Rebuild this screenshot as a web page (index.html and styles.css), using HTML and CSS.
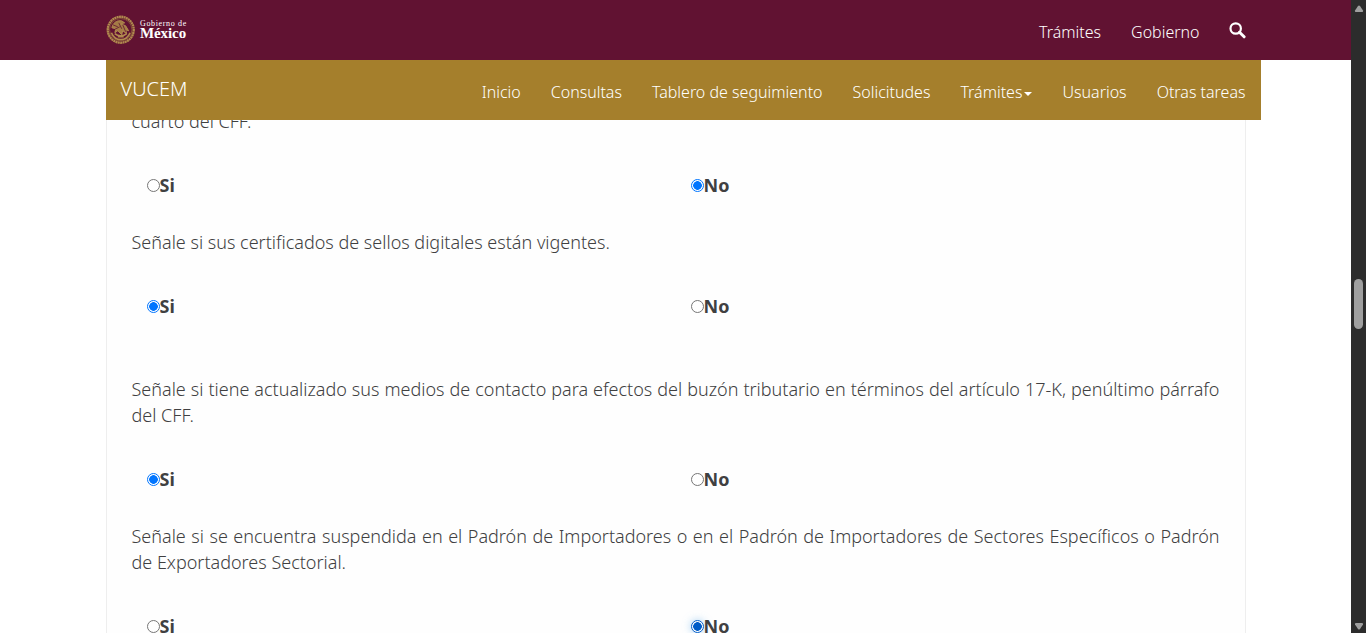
FILE: index.html
```html
<!DOCTYPE html>
<html lang="es">
<head>
<meta charset="utf-8">
<title>VUCEM</title>
<link rel="stylesheet" href="styles.css">
</head>
<body>
<div class="page">
  <header class="gov-bar">
    <a class="brand">
      <svg class="seal" viewBox="0 0 30 30" fill="none" stroke="#b08a4e">
        <circle cx="15" cy="15" r="13.200" stroke-width="2.400" stroke-dasharray="2 .4"/>
        <circle cx="15" cy="15" r="11.400" stroke="#8c6138" stroke-width=".8"/>
        <path d="M6 13c1-5 5-8 10-7l3 2-4 1 5 2 3 5-3-1 1 4-4-3-1 4-4-4-3 2 1-4z" fill="#a47b46" stroke-width="1"/>
        <path d="M7 10l5 2M8 15l6-3M13 8l3 6M17 10l3 7" stroke="#611232" stroke-width=".8"/>
        <path d="M5.500 18c2 5 6 7 9.500 7s7.500-2 9.500-7M9 19c3 3 9 3 12 0M12 22h6" stroke-width="1.700"/>
      </svg>
      <span class="wordmark"><span class="word-small">Gobierno de</span><span class="word-big">México</span></span>
    </a>
    <nav class="links gov-links">
      <a>Trámites</a><a>Gobierno</a>
      <a class="search"><svg viewBox="0 0 17 17" width="17" height="17" fill="none" stroke="#fff"><circle cx="6.700" cy="6.500" r="5.200" stroke-width="2.200"/><path d="M10.500 10.300l4.600 4.500" stroke-width="3" stroke-linecap="round"/></svg></a>
    </nav>
  </header>
  <div class="sub-bar">
    <a class="title">VUCEM</a>
    <nav class="links">
      <a>Inicio</a><a>Consultas</a><a>Tablero de seguimiento</a><a>Solicitudes</a><a>Trámites<i class="caret"></i></a><a>Usuarios</a><a>Otras tareas</a>
    </nav>
  </div>
  <main class="panel">
    <p class="question clipped">cuarto del CFF.</p>
    <div class="options first"><label><i class="radio"></i>Si</label><label><i class="radio on"></i>No</label></div>
    <p class="question">Señale si sus certificados de sellos digitales están vigentes.</p>
    <div class="options wide"><label><i class="radio on"></i>Si</label><label><i class="radio"></i>No</label></div>
    <p class="question">Señale si tiene actualizado sus medios de contacto para efectos del buzón tributario en términos del artículo 17-K, penúltimo párrafo del CFF.</p>
    <div class="options close"><label><i class="radio on"></i>Si</label><label><i class="radio"></i>No</label></div>
    <p class="question">Señale si se encuentra suspendida en el Padrón de Importadores o en el Padrón de Importadores de Sectores Específicos o Padrón de Exportadores Sectorial.</p>
    <div class="options last"><label><i class="radio"></i>Si</label><label><i class="radio on active"></i>No</label></div>
  </main>
</div>
<aside class="scrollbar">
  <svg width="10" height="8" viewBox="0 0 10 8"><path d="M4 1q1-1 2 0l3 4.500q.6 1.500-1 1.500H2Q.4 7 1 5.500z" fill="#9f9f9f"/></svg>
  <span class="thumb"></span>
  <svg width="10" height="8" viewBox="0 0 10 8"><path d="M4 7q1 1 2 0l3-4.500Q9.600 1 8 1H2Q.4 1 1 2.500z" fill="#9f9f9f"/></svg>
</aside>
</body>
</html>
```
FILE: styles.css
```css
* { box-sizing: border-box; }
body {
  margin: 0;
  height: 633px;
  overflow: hidden;
  display: flex;
  background: #fff;
  color: #404041;
  font: 300 18px/26px "Noto Sans", "Open Sans", sans-serif;
}
.page { width: 1351px; height: 633px; overflow: hidden; }
.gov-bar {
  height: 60px;
  padding: 0 105.500px 0 105.500px;
  display: flex;
  justify-content: space-between;
  background: #611232;
  color: #fff;
}
.brand { display: flex; align-items: flex-start; padding-top: 15px; gap: 5px; }
.seal { width: 29.500px; height: 29.500px; }
.wordmark { display: flex; flex-direction: column; padding-top: 5px; font-family: "Liberation Serif", serif; }
.word-small { font: 400 8px/8px "Liberation Serif", serif; letter-spacing: .65px; white-space: nowrap; }
.word-big { font-size: 15px; line-height: 11px; font-weight: 700; letter-spacing: -.1px; }
.links { display: flex; gap: 30px; font-size: 16px; line-height: 24px; padding-top: 20px; color: #fff; white-space: nowrap; }
.gov-links { gap: 30px 30px; }
.search { padding-top: 2px; margin-left: -1px; }
.search svg { display: block; }
.sub-bar {
  width: 1155px;
  height: 60px;
  margin-left: 106px;
  padding: 0 15.500px 0 14.500px;
  display: flex;
  justify-content: space-between;
  background: #a57f2c;
  color: #fff;
}
.title { font-size: 20px; line-height: 28px; padding-top: 15px; }
.caret {
  display: inline-block;
  margin-left: 2px;
  vertical-align: middle;
  border: 4px solid transparent;
  border-top-color: #fff;
  border-bottom: 0;
}
.panel {
  width: 1140px;
  height: 513px;
  margin-left: 106px;
  padding: 0 25.500px 0 24.500px;
  overflow: hidden;
  border: solid #eee;
  border-width: 0 1px;
  background: #fefefe;
}
.question { margin: 0; text-align: justify; }
.clipped { margin-top: -12px; }
.options {
  display: grid;
  grid-template-columns: 544px 1fr;
  margin: 38px 0 31px;
  padding-left: 15px;
  font-weight: 700;
}
.wide { margin-bottom: 57px; }
.last { margin-top: 38px; }
.options label { display: flex; align-items: center; }
.radio {
  width: 13px;
  height: 13px;
  border: 1px solid #767676;
  border-radius: 50%;
  background: #fff;
}
.on { border-color: #0075ff; background: radial-gradient(circle, #0075ff 4px, #fff 4.600px); }
.active { border-color: #005cc8; background: radial-gradient(circle, #005cc8 4px, #fff 4.600px); box-shadow: 0 0 8px #66afe999; }
.scrollbar {
  width: 15px;
  height: 633px;
  padding: 5px 0 3px;
  display: flex;
  flex-direction: column;
  align-items: center;
  justify-content: space-between;
  background: #2c2c2c;
}
.thumb { width: 9px; height: 50px; margin-bottom: 28px; border-radius: 5px; background: #9f9f9f; }
```
